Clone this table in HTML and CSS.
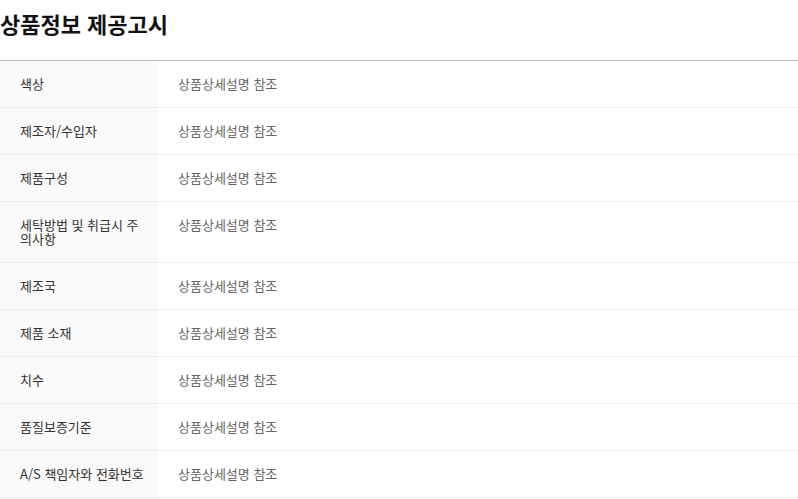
FILE: index.html
```html
<!DOCTYPE html>
<html lang="ko">
<head>
<meta charset="utf-8">
<link rel="stylesheet" href="styles.css">
</head>
<body>
<div class="notice">
  <h2 class="notice-title">상품정보 제공고시</h2>
  <table class="notice-table">
    <tbody>
      <tr><th>색상</th><td>상품상세설명 참조</td></tr>
      <tr><th>제조자/수입자</th><td>상품상세설명 참조</td></tr>
      <tr><th>제품구성</th><td>상품상세설명 참조</td></tr>
      <tr><th>세탁방법 및 취급시 주의사항</th><td>상품상세설명 참조</td></tr>
      <tr><th>제조국</th><td>상품상세설명 참조</td></tr>
      <tr><th>제품 소재</th><td>상품상세설명 참조</td></tr>
      <tr><th>치수</th><td>상품상세설명 참조</td></tr>
      <tr><th>품질보증기준</th><td>상품상세설명 참조</td></tr>
      <tr><th>A/S 책임자와 전화번호</th><td>상품상세설명 참조</td></tr>
    </tbody>
  </table>
</div>
</body>
</html>
```
FILE: styles.css
```css
html, body {
  margin: 0;
  padding: 0;
  background: #fff;
}
body {
  font-family: "Noto Sans CJK KR", "Noto Sans", sans-serif;
}
.notice {
  width: 798px;
}
.notice-title {
  margin: 0;
  padding-top: 8px;
  height: 60px;
  box-sizing: border-box;
  font-size: 22px;
  line-height: 30px;
  font-weight: 700;
  color: #111;
}
.notice-table {
  width: 100%;
  border-collapse: collapse;
  border-top: 1px solid #bbb;
  table-layout: fixed;
}
.notice-table th,
.notice-table td {
  padding: 16px 20px;
  font-size: 13px;
  line-height: 14px;
  text-align: left;
  vertical-align: top;
  border-bottom: 1px solid #eee;
}
.notice-table th {
  width: 128px;
  padding-right: 10px;
  background: #f9f9f9;
  font-weight: 400;
  color: #333;
}
.notice-table td {
  color: #666;
}
```
